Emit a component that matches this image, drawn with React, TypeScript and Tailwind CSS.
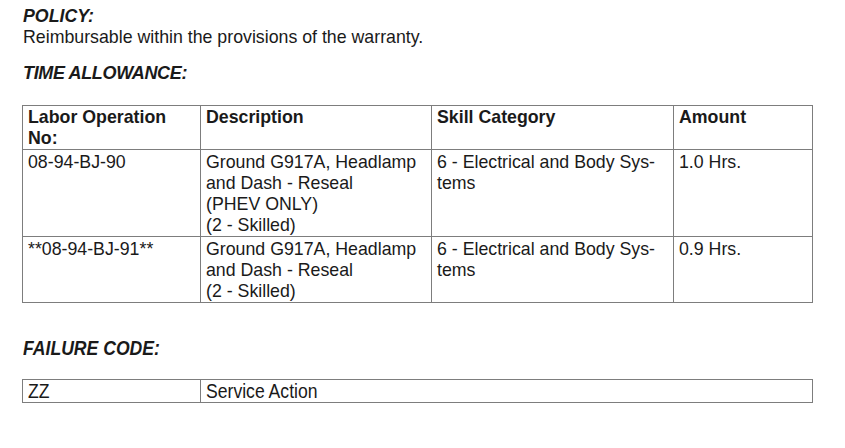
const rows = [
  {
    op: "08-94-BJ-90",
    desc: ["Ground G917A, Headlamp", "and Dash - Reseal", "(PHEV ONLY)", "(2 - Skilled)"],
    skill: ["6 - Electrical and Body Sys-", "tems"],
    amount: "1.0 Hrs.",
  },
  {
    op: "**08-94-BJ-91**",
    desc: ["Ground G917A, Headlamp", "and Dash - Reseal", "(2 - Skilled)"],
    skill: ["6 - Electrical and Body Sys-", "tems"],
    amount: "0.9 Hrs.",
  },
];

function Lines({ items }: { items: string[] }) {
  return (
    <>
      {items.map((t) => (
        <div key={t}>{t}</div>
      ))}
    </>
  );
}

export default function App() {
  const cell = "border border-[#7d7d7d] px-[5px] pb-0 align-top";
  return (
    <div className="w-[845px] h-[448px] bg-white text-[#1a1a1a] font-['Liberation_Sans',Arial,sans-serif] text-[17.75px] leading-[21px] pl-[23px] pt-[6px] overflow-hidden">
      <div className="font-bold italic">POLICY:</div>
      <div>Reimbursable within the provisions of the warranty.</div>

      <div className="mt-[15px] font-bold italic text-[18px] tracking-[-0.35px]">TIME ALLOWANCE:</div>

      <table className="mt-[21px] -ml-px border-collapse w-[790px] table-fixed">
        <colgroup>
          <col className="w-[178px]" />
          <col className="w-[231px]" />
          <col className="w-[242px]" />
          <col className="w-[139px]" />
        </colgroup>
        <thead>
          <tr className="font-bold text-left">
            <th className={cell + " pt-px font-bold"}>
              <div>Labor Operation</div>
              <div>No:</div>
            </th>
            <th className={cell + " pt-px font-bold"}>Description</th>
            <th className={cell + " pt-px font-bold"}>Skill Category</th>
            <th className={cell + " pt-px font-bold"}>Amount</th>
          </tr>
        </thead>
        <tbody>
          {rows.map((r) => (
            <tr key={r.op}>
              <td className={cell + " pt-[2px]"}>{r.op}</td>
              <td className={cell + " pt-[2px]"}>
                <Lines items={r.desc} />
              </td>
              <td className={cell + " pt-[2px]"}>
                <Lines items={r.skill} />
              </td>
              <td className={cell + " pt-[2px]"}>{r.amount}</td>
            </tr>
          ))}
        </tbody>
      </table>

      <div className="mt-[34px] font-bold italic text-[20px] leading-[23px]">
        <span className="inline-block origin-left scale-x-[0.88]">FAILURE CODE:</span>
      </div>

      <table className="mt-[19px] -ml-px border-collapse w-[790px] table-fixed text-[20px] leading-[21px]">
        <colgroup>
          <col className="w-[178px]" />
          <col className="w-[612px]" />
        </colgroup>
        <tbody>
          <tr>
            <td className="border border-[#7d7d7d] px-[5px] pt-px pb-0">
              <span className="inline-block origin-left scale-x-[0.88]">ZZ</span>
            </td>
            <td className="border border-[#7d7d7d] px-[5px] pt-px pb-0">
              <span className="inline-block origin-left scale-x-[0.88]">Service Action</span>
            </td>
          </tr>
        </tbody>
      </table>
    </div>
  );
}
